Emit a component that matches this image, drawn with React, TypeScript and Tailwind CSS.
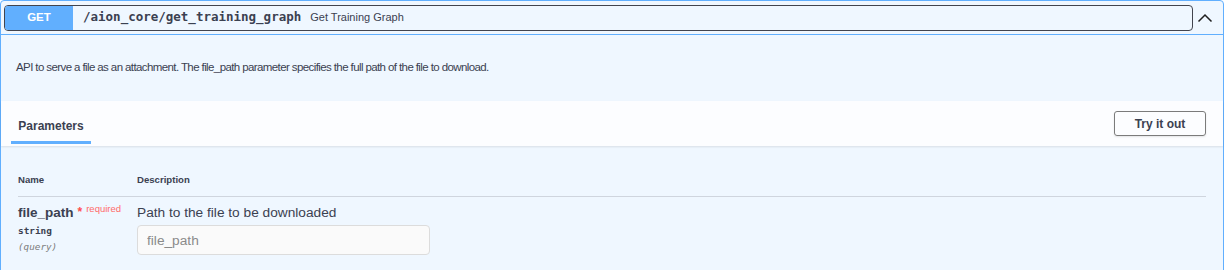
export default function App() {
  const sans = { fontFamily: '"Liberation Sans", Arial, sans-serif' };
  const mono = { fontFamily: '"DejaVu Sans Mono", "Liberation Mono", monospace' };

  return (
    <div className="w-[1231px] h-[270px] bg-white overflow-hidden" style={sans}>
      <div className="w-[1224px] min-h-[300px] border border-[#61affe] rounded-[4px] bg-[#eff7ff]">
        {/* summary */}
        <div className="h-[34px] flex items-center border-b border-[#61affe] pl-[3px]">
          <div className="flex-1 h-[26px] flex items-center border border-[#41444e] rounded-[4px]">
            <span className="w-[68px] h-full flex items-center justify-center bg-[#61affe] text-white font-bold text-[11.5px] rounded-l-[3px]">
              GET
            </span>
            <span className="ml-[10px] font-bold text-[12.5px] text-[#3b4151]" style={mono}>
              /aion_core/get_training_graph
            </span>
            <span className="ml-[9px] text-[11px] text-[#3b4151]">Get Training Graph</span>
          </div>
          <svg className="ml-[4px] mr-[10px]" width="16" height="16" viewBox="0 0 16 16" fill="none">
            <polyline points="1.5,11.5 8,5 14.5,11.5" stroke="#1f1f1f" strokeWidth="1.5" />
          </svg>
        </div>

        {/* description */}
        <div className="h-[66px] flex items-center pl-[15px]">
          <p className="text-[11.5px] tracking-[-0.6px] text-[#3b4151]">
            API to serve a file as an attachment. The file_path parameter specifies the full path of the file to download.
          </p>
        </div>

        {/* parameters header */}
        <div className="h-[45px] flex items-end justify-between bg-white/80 shadow-[0_1px_2px_rgba(0,0,0,0.1)] px-[17px]">
          <div className="relative ml-[-7px] w-[80px] h-[45px] flex flex-col items-center">
            <span className="mt-[16px] text-[12px] font-bold text-[#3b4151]">Parameters</span>
            <span className="absolute left-0 top-[40px] w-[80px] h-[3px] bg-[#61affe]" />
          </div>
          <button className="self-center w-[92px] h-[25px] border-[1.5px] border-[#7b7b7b] rounded-[3px] bg-transparent text-[12px] font-bold text-[#3b4151] shadow-[0_1px_2px_rgba(0,0,0,0.1)]">
            Try it out
          </button>
        </div>

        {/* table */}
        <div className="px-[17px] pt-[27px]">
          <div className="flex h-[24px] items-start border-b border-[#cfd5de] text-[9.6px] font-bold text-[#3b4151]">
            <span className="w-[119px]">Name</span>
            <span>Description</span>
          </div>
          <div className="flex pt-[7px]">
            <div className="w-[119px] flex flex-col">
              <div className="flex items-start">
                <span className="text-[13.5px] font-bold text-[#3b4151] leading-[17px]">file_path</span>
                <span className="ml-[4px] text-[12px] font-bold text-[#ff4d4d] leading-[14px] mt-[1px]">*</span>
                <span className="ml-[4px] text-[9.5px] text-[#ff6a6a] leading-[10px]">required</span>
              </div>
              <span className="mt-[4px] text-[9.4px] font-bold text-[#3b4151] leading-[12px]" style={mono}>
                string
              </span>
              <span className="mt-[4px] text-[9.3px] italic text-[#7c7c7c] leading-[12px]" style={mono}>
                (query)
              </span>
            </div>
            <div className="flex flex-col">
              <span className="text-[13.7px] text-[#3b4151] leading-[17px]">Path to the file to be downloaded</span>
              <input
                className="mt-[4px] w-[293px] h-[30px] px-[9px] bg-[#fafafa] border border-[#dcdcdc] rounded-[4px] text-[13.7px] placeholder:text-[#8a8a8a] outline-none"
                placeholder="file_path"
                style={sans}
              />
            </div>
          </div>
        </div>
      </div>
    </div>
  );
}
